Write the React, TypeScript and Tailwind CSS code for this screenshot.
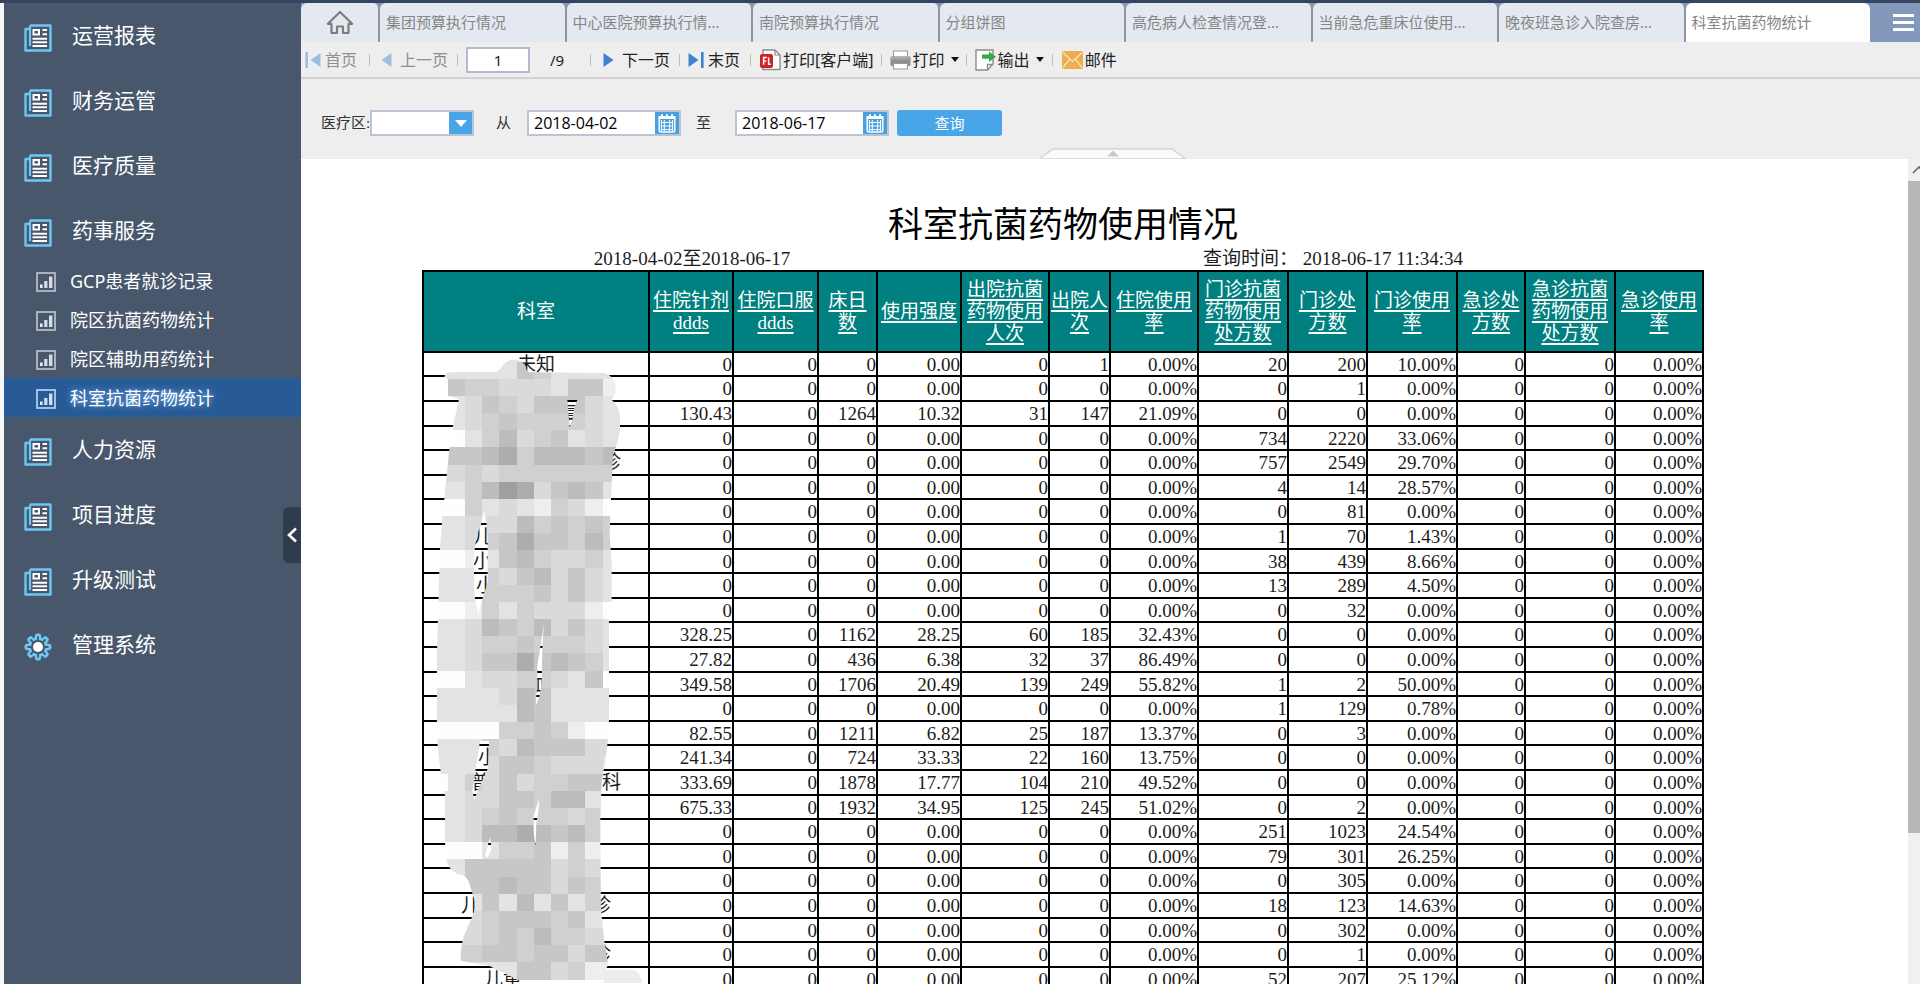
import React from "react";

const SANS = "font-['Noto_Sans','Noto_Sans_CJK_SC',sans-serif]";
const SERIF = "font-['Liberation_Serif','Noto_Sans_CJK_SC',serif]";

/* ---------- icons ---------- */

function ReportIcon() {
  return (
    <svg width="28" height="28" viewBox="0 0 28 28" fill="none" className="shrink-0">
      <path d="M6 1.5H26.5V26.5H1.5V5H6" stroke="#6cc7f2" strokeWidth="2.4" strokeLinejoin="round" />
      <path d="M6 1.5V22" stroke="#6cc7f2" strokeWidth="2.2" />
      <rect x="9.5" y="6" width="5.5" height="4.5" stroke="#fff" strokeWidth="2" />
      <path d="M18.5 6H23M18.5 10.3H23M8.5 14.7H23M8.5 18.3H23M8.5 22H23" stroke="#fff" strokeWidth="2" />
    </svg>
  );
}

function GearIcon() {
  const teeth = [0, 45, 90, 135, 180, 225, 270, 315];
  return (
    <svg width="28" height="28" viewBox="0 0 28 28" className="shrink-0">
      {teeth.map((a) => (
        <rect key={a} x="10.8" y="0.5" width="6.4" height="8" rx="2.4" fill="#6cc7f2" transform={`rotate(${a} 14 14)`} />
      ))}
      <circle cx="14" cy="14" r="10" fill="#6cc7f2" />
      {teeth.map((a) => (
        <rect key={a} x="13.1" y="3.2" width="1.8" height="5" rx="0.9" fill="#48576c" transform={`rotate(${a} 14 14)`} />
      ))}
      <circle cx="14" cy="14" r="7.2" fill="#48576c" />
      <circle cx="14" cy="14" r="5" fill="#fff" />
    </svg>
  );
}

function ChartIcon({ active }: { active?: boolean }) {
  return (
    <svg width="20" height="20" viewBox="0 0 20 20" fill="none" className="shrink-0">
      <rect x="1" y="1" width="18" height="18" stroke={active ? "#a9cdf3" : "#b4bcc6"} strokeWidth="1.8" />
      <rect x="4" y="12.5" width="2.6" height="3.5" fill="#e8edf2" />
      <rect x="8.2" y="9" width="3.2" height="7" fill="#d5dce4" />
      <rect x="13" y="4.5" width="3.4" height="11.5" fill="#d5dce4" />
    </svg>
  );
}

function CalendarIcon() {
  return (
    <svg width="18" height="20" viewBox="0 0 18 20" fill="none">
      <path d="M4 1V4M9 1V4M14 1V4" stroke="#fff" strokeWidth="1.6" />
      <rect x="0.5" y="3" width="17" height="3" fill="#fff" />
      <rect x="1.2" y="4" width="15.6" height="15" rx="1.5" stroke="#fff" strokeWidth="1.4" />
      <path d="M3 9.5H15M3 13H15M3 16.6H15M6.3 7V18M11.7 7V18M3.4 7V18M14.6 7V18" stroke="#fff" strokeWidth="1" />
    </svg>
  );
}

function FlashDocIcon() {
  return (
    <svg width="21" height="22" viewBox="0 0 21 22" fill="none">
      <path d="M3 1H15L20 6V20.5H3Z" fill="#fff" stroke="#8a8a8a" strokeWidth="1.4" />
      <path d="M15 1V6H20" stroke="#8a8a8a" strokeWidth="1.2" />
      <rect x="0" y="5" width="13" height="14" rx="2" fill="#cf2127" />
      <path d="M3.6 15.8V8.6H6.8M3.6 12H6.2M8.6 8.4V15.2H10.8" stroke="#fff" strokeWidth="1.5" />
    </svg>
  );
}

function PrinterIcon() {
  return (
    <svg width="21" height="20" viewBox="0 0 21 20" fill="none">
      <rect x="3.5" y="1" width="14" height="7" fill="#fff" stroke="#999" strokeWidth="1" />
      <rect x="0.5" y="6.5" width="20" height="9.5" rx="1.5" fill="#8e8e8e" />
      <rect x="0.5" y="6.5" width="20" height="3" rx="1.2" fill="#a9a9a9" />
      <rect x="3.5" y="13.5" width="14" height="5.5" fill="#fff" stroke="#999" strokeWidth="1" />
    </svg>
  );
}

function ExportIcon() {
  return (
    <svg width="21" height="22" viewBox="0 0 21 22" fill="none">
      <path d="M1 1H18V15L12.5 21H1Z" fill="#fff" stroke="#8a8a8a" strokeWidth="1.4" />
      <path d="M12.5 21V15.5H18" stroke="#8a8a8a" strokeWidth="1.3" />
      <path d="M7 5.5H14V2.5L21 7.7L14 13V9.8H7Z" fill="#35a84c" />
    </svg>
  );
}

function MailIcon() {
  return (
    <svg width="21" height="18" viewBox="0 0 21 18" fill="none">
      <rect width="21" height="18" rx="1.5" fill="#ecae4f" />
      <path d="M1 1.5L10.5 10.5L20 1.5M1 16.5L7.8 8.2M20 16.5L13.2 8.2" stroke="#fbe6c0" strokeWidth="1.2" />
    </svg>
  );
}

function Arrow({ dir, bar, faded }: { dir: "left" | "right"; bar?: boolean; faded?: boolean }) {
  const color = faded ? "#9dbde3" : "#3f82cf";
  return (
    <svg
      width={bar ? 16 : 11}
      height="16"
      viewBox={bar ? "0 0 16 16" : "0 0 11 16"}
      className={dir === "left" ? "rotate-180" : ""}
    >
      <path d="M0.5 1L10.5 8L0.5 15Z" fill={color} />
      {bar && <rect x="13" y="0" width="2.6" height="16" fill={color} />}
    </svg>
  );
}

function Caret() {
  return (
    <svg width="8" height="5" viewBox="0 0 8 5">
      <path d="M0 0H8L4 5Z" fill="#111" />
    </svg>
  );
}

/* ---------- sidebar ---------- */

type MenuItem = { label: string; gear?: boolean; children?: string[] };

const MENU: MenuItem[] = [
  { label: "运营报表" },
  { label: "财务运管" },
  { label: "医疗质量" },
  { label: "药事服务", children: ["GCP患者就诊记录", "院区抗菌药物统计", "院区辅助用药统计", "科室抗菌药物统计"] },
  { label: "人力资源" },
  { label: "项目进度" },
  { label: "升级测试" },
  { label: "管理系统", gear: true },
];

const ACTIVE = "科室抗菌药物统计";

function Sidebar() {
  return (
    <aside className="relative w-[297px] shrink-0 bg-[#48576c] text-white">
      <nav>
        <ul>
          {MENU.map((m) => (
            <li key={m.label}>
              <a href="#" className="flex h-[65px] items-center gap-5 pl-5">
                <span className="pt-1">{m.gear ? <GearIcon /> : <ReportIcon />}</span>
                <span className="pb-[2px] text-[21px] leading-7">{m.label}</span>
              </a>
              {m.children && (
                <ul className="-mt-[2px]">
                  {m.children.map((c) => (
                    <li key={c}>
                      <a
                        href="#"
                        className={
                          c === ACTIVE
                            ? "flex h-[39px] items-center gap-3.5 bg-[#285a96] pt-[2px] pl-8 [text-shadow:0_0_6px_#7fc0ff]"
                            : "flex h-[39px] items-center gap-3.5 pt-[2px] pl-8"
                        }
                      >
                        <ChartIcon active={c === ACTIVE} />
                        <span className="pb-[2px] text-[18px] leading-6">{c}</span>
                      </a>
                    </li>
                  ))}
                </ul>
              )}
            </li>
          ))}
        </ul>
      </nav>
      <button
        aria-label="收起菜单"
        className="absolute top-[504px] right-0 flex h-14 w-[18px] items-center justify-center rounded-l-md bg-[#303b4b]"
      >
        <svg width="10" height="16" viewBox="0 0 10 16" fill="none">
          <path d="M9 1.5L2 8L9 14.5" stroke="#fff" strokeWidth="2.6" />
        </svg>
      </button>
    </aside>
  );
}

/* ---------- tabs and toolbars ---------- */

const TABS = [
  "集团预算执行情况",
  "中心医院预算执行情...",
  "南院预算执行情况",
  "分组饼图",
  "高危病人检查情况登...",
  "当前急危重床位使用...",
  "晚夜班急诊入院查房...",
  "科室抗菌药物统计",
];

function TabBar() {
  return (
    <div className="flex h-[39px] bg-[#8299bb]">
      <button aria-label="首页" className="flex w-[79px] items-center justify-center rounded-t-md border-r-2 border-[#8e969f] bg-[#e4e9f1]">
        <svg width="28" height="25" viewBox="0 0 28 25" fill="none">
          <path d="M14 2L1.8 13.8H5.5V23H11V16.5H17V23H22.5V13.8H26.2Z" stroke="#7d7d7d" strokeWidth="2.2" strokeLinejoin="round" />
        </svg>
      </button>
      {TABS.map((t) => (
        <button
          key={t}
          className={
            t === ACTIVE
              ? "min-w-0 flex-1 rounded-t-md bg-white px-[6px] text-left text-[15px] whitespace-nowrap text-[#858585]"
              : "min-w-0 flex-1 rounded-t-md border-r-2 border-[#8e969f] bg-[#e4e9f1] px-[6px] text-left text-[15px] whitespace-nowrap text-[#858585]"
          }
        >
          {t}
        </button>
      ))}
      <button aria-label="菜单" className="flex w-[50px] items-center justify-end pr-1.5">
        <svg width="21" height="17" viewBox="0 0 21 17">
          <path d="M0 1.5H21M0 8.5H21M0 15.5H21" stroke="#fff" strokeWidth="3" />
        </svg>
      </button>
    </div>
  );
}

function Sep() {
  return <span className="h-3 w-px bg-[#bdbdbd]" />;
}

function PagerBar() {
  return (
    <div className="flex h-[37px] items-center border-b-2 border-[#d0d1d0] bg-[#eeeeee] pl-1 text-[16px] leading-6 whitespace-nowrap text-[#222]">
      <button className="flex items-center gap-1 text-[#8f8f8f]">
        <Arrow dir="left" bar faded />
        首页
      </button>
      <span className="flex w-6 justify-center"><Sep /></span>
      <button className="flex items-center gap-2 text-[#8f8f8f]">
        <Arrow dir="left" faded />
        上一页
      </button>
      <span className="flex w-[18px] justify-center"><Sep /></span>
      <input
        aria-label="页码"
        defaultValue="1"
        className="h-[26px] w-16 border-2 border-[#b4bacb] bg-white text-center text-[15px] outline-none"
      />
      <span className="w-[60px] pl-5 text-[15px]">/9</span>
      <Sep />
      <button className="ml-3 flex items-center gap-2">
        <Arrow dir="right" />
        下一页
      </button>
      <span className="flex w-[18px] justify-center"><Sep /></span>
      <button className="flex items-center gap-1">
        <Arrow dir="right" bar />
        末页
      </button>
      <span className="flex w-5 justify-center"><Sep /></span>
      <button className="flex items-center gap-0.5">
        <FlashDocIcon />
        打印[客户端]
      </button>
      <span className="flex w-4 justify-center"><Sep /></span>
      <button className="flex items-center gap-0.5">
        <PrinterIcon />
        打印
        <span className="pl-1"><Caret /></span>
      </button>
      <span className="flex w-4 justify-center"><Sep /></span>
      <button className="flex items-center gap-0.5">
        <ExportIcon />
        输出
        <span className="pl-1"><Caret /></span>
      </button>
      <span className="flex w-[18px] justify-center"><Sep /></span>
      <button className="flex items-center gap-0.5">
        <MailIcon />
        邮件
      </button>
    </div>
  );
}

function DateField({ id, value }: { id: string; value: string }) {
  return (
    <div className="flex h-[26px] w-[154px] border-2 border-[#bcc3d2] bg-white">
      <input
        id={id}
        defaultValue={value}
        className="min-w-0 flex-1 bg-white pl-[5px] font-['Open_Sans',sans-serif] text-[16px] text-black outline-none"
      />
      <button aria-label="选择日期" className="flex w-6 items-center justify-center bg-[#489fdd]">
        <CalendarIcon />
      </button>
    </div>
  );
}

function FilterBar() {
  return (
    <div className="relative flex h-20 items-center bg-[#eeeeee] pt-2 pl-5 text-[#333]">
      <label htmlFor="area" className={`${SERIF} w-[49px] text-[15px] whitespace-nowrap`}>
        医疗区:
      </label>
      <div className="relative h-[26px] w-[104px]">
        <select id="area" className="h-full w-full appearance-none border-2 border-[#bcc3d2] bg-white outline-none" />
        <span className="pointer-events-none absolute top-0.5 right-0.5 bottom-0.5 flex w-[23px] items-center justify-center bg-[#47a5e8]">
          <svg width="12" height="7" viewBox="0 0 12 7">
            <path d="M0 0H12L6 7Z" fill="#fff" />
          </svg>
        </span>
      </div>
      <label htmlFor="from" className={`${SERIF} w-[53px] pl-[22px] text-[15px]`}>
        从
      </label>
      <DateField id="from" value="2018-04-02" />
      <label htmlFor="to" className={`${SERIF} w-[54px] pl-[15px] text-[15px]`}>
        至
      </label>
      <DateField id="to" value="2018-06-17" />
      <button className="ml-2 h-[26px] w-[105px] rounded-[3px] bg-[#47a5e8] text-[15px] leading-6 text-white">查询</button>
      <button aria-label="收起查询条件" className="absolute bottom-0 left-[738px]">
        <svg width="147" height="11" viewBox="0 0 147 11" className="block">
          <path d="M0 11L14 1H133L147 11Z" fill="#fafafa" stroke="#d4d4d4" strokeWidth="1.4" />
          <path d="M68 8.5L74 2.5L80 8.5Z" fill="#c9c9c9" />
        </svg>
      </button>
    </div>
  );
}

/* ---------- report ---------- */

const HEADERS: string[][] = [
  ["科室"],
  ["住院针剂", "ddds"],
  ["住院口服", "ddds"],
  ["床日", "数"],
  ["使用强度"],
  ["出院抗菌", "药物使用", "人次"],
  ["出院人", "次"],
  ["住院使用", "率"],
  ["门诊抗菌", "药物使用", "处方数"],
  ["门诊处", "方数"],
  ["门诊使用", "率"],
  ["急诊处", "方数"],
  ["急诊抗菌", "药物使用", "处方数"],
  ["急诊使用", "率"],
];

const COLS = [
  "w-[226px]", "w-[84px]", "w-[85px]", "w-[59px]", "w-[84px]", "w-[88px]", "w-[61px]",
  "w-[88px]", "w-[90px]", "w-[79px]", "w-[90px]", "w-[68px]", "w-[90px]", "w-[88px]",
];

/* Columns: 针剂, 床日, 强度, 抗菌人次, 出院人次, 住院率, 门诊抗菌, 门诊处方, 门诊率 */
const DATA = `
0 0 0.00 0 1 0.00% 20 200 10.00%
0 0 0.00 0 0 0.00% 0 1 0.00%
130.43 1264 10.32 31 147 21.09% 0 0 0.00%
0 0 0.00 0 0 0.00% 734 2220 33.06%
0 0 0.00 0 0 0.00% 757 2549 29.70%
0 0 0.00 0 0 0.00% 4 14 28.57%
0 0 0.00 0 0 0.00% 0 81 0.00%
0 0 0.00 0 0 0.00% 1 70 1.43%
0 0 0.00 0 0 0.00% 38 439 8.66%
0 0 0.00 0 0 0.00% 13 289 4.50%
0 0 0.00 0 0 0.00% 0 32 0.00%
328.25 1162 28.25 60 185 32.43% 0 0 0.00%
27.82 436 6.38 32 37 86.49% 0 0 0.00%
349.58 1706 20.49 139 249 55.82% 1 2 50.00%
0 0 0.00 0 0 0.00% 1 129 0.78%
82.55 1211 6.82 25 187 13.37% 0 3 0.00%
241.34 724 33.33 22 160 13.75% 0 0 0.00%
333.69 1878 17.77 104 210 49.52% 0 0 0.00%
675.33 1932 34.95 125 245 51.02% 0 2 0.00%
0 0 0.00 0 0 0.00% 251 1023 24.54%
0 0 0.00 0 0 0.00% 79 301 26.25%
0 0 0.00 0 0 0.00% 0 305 0.00%
0 0 0.00 0 0 0.00% 18 123 14.63%
0 0 0.00 0 0 0.00% 0 302 0.00%
0 0 0.00 0 0 0.00% 0 1 0.00%
0 0 0.00 0 0 0.00% 52 207 25.12%`
  .trim()
  .split("\n")
  .map((line) => {
    const v = line.split(" ");
    return [v[0], "0", ...v.slice(1), "0", "0", "0.00%"];
  });

/* Parts of department names that the redaction leaves readable. */
const NAMES: Record<number, { left?: string; right?: string; box: string }> = {
  0: { left: "未知", box: "w-[38px]" },
  2: { right: "复", box: "w-[88px]" },
  4: { right: "诊", box: "w-[170px]" },
  7: { left: "儿", box: "w-[126px]" },
  8: { left: "小", box: "w-[126px]" },
  9: { left: "小", box: "w-[120px]" },
  13: { left: "血", box: "w-[19px]" },
  16: { left: "小", box: "w-[116px]" },
  17: { left: "普", right: "科", box: "w-[170px] pl-5" },
  22: { left: "儿", right: "诊", box: "w-[150px]" },
  24: { right: "诊", box: "w-[150px]" },
  25: { left: "儿童", box: "w-[104px]" },
};

const SHADES: Record<string, string> = {
  ".": "#fefefe", "1": "#eeeeee", "2": "#e3e3e3", "3": "#dadada", "4": "#d0d0d0",
  "5": "#c7c7c7", "6": "#bcbcbc", "7": "#adadad", "8": "#9f9f9f",
};

const MOSAIC = [
  "22222222222", "22222542222", ".5443332551", "22354355532", "22345444432", "..246345232",
  "45567466656", "33434444444", "22468735652", "..42321431.", "22333645454", "22345755464",
  "..125643342", "22243563532", "22244453532", "..14243331.", "22365463532", "22344544432",
  "22355756542", "..23344325.", "22223652222", "22222652222", "....44541..", "22243655533",
  "22235543332", ".2435344553", "22335546622", "22345444344", "22366765644", "...24451411",
  "22555553433", "..556553544", "..252625244", "33345554522", "33345464433", "44455455355",
  "22222553411",
].slice(1);

const OUTLINE =
  "M106 85Q108 72 122 70L262 68Q275 64 283 46Q300 30 318 32Q345 34 350 56Q352 66 362 70L585 72Q602 76 614 92Q624 112 618 135L608 152Q630 172 633 200V240Q628 280 612 320L606 450L602 560L608 640V760L600 814V1122L596 1180L588 1240L578 1300L574 1400V1480L576 1680L585 1770L597 1848L590 1862H670Q690 1866 692 1880L700 1902H340Q318 1888 290 1875L240 1850L155 1835Q155 1790 165 1760L195 1690L200 1665L180 1600Q172 1582 160 1578Q126 1574 113 1538L108 1480V1340L96 1278L86 1190L83 1120V942L90 700L93 600L100 500L106 450L120 310L130 240L150 150L116 140V90Z" +
  "M475 153H505Q492 180 490 212L482 235Z" +
  "M225 485Q234 520 236 560V700L220 750L208 795Q196 750 195 720V620Q200 560 215 530Z" +
  "M405 825Q402 860 400 900L398 1000Q394 1045 380 1070Q386 1000 385 950Z" +
  "M213 1176H240Q240 1220 236 1260L208 1320L196 1352L190 1325Z" +
  "M390 1350Q390 1390 382 1420L380 1490L374 1450V1400Z" +
  "M243 1465L248 1500L236 1525L228 1520Z";

function Redaction() {
  return (
    <svg
      width="226"
      height="634"
      viewBox="39 0 678 1902"
      className="pointer-events-none absolute top-[79px] left-0"
      aria-hidden="true"
    >
      <defs>
        <clipPath id="blot">
          <path d={OUTLINE} clipRule="evenodd" />
        </clipPath>
      </defs>
      <g clipPath="url(#blot)" shapeRendering="crispEdges">
        {MOSAIC.map((row, r) =>
          row.split("").map((ch, c) => (
            <rect key={`${r}-${c}`} x={64.5 + c * 51.6} y={37.6 + r * 51.5} width="52.6" height="52.6" fill={SHADES[ch]} />
          )),
        )}
        <rect x="100" y="28" width="500" height="12" fill="#e3e3e3" />
        <rect x="584" y="1856" width="120" height="50" fill="#ececec" />
      </g>
    </svg>
  );
}

function ReportTable() {
  return (
    <table className="table-fixed border-collapse text-[19px] text-[#1c1c1c]">
      <colgroup>
        {COLS.map((w, i) => (
          <col key={i} className={w} />
        ))}
      </colgroup>
      <thead>
        <tr className="h-[81px] bg-[#008080] text-white">
          {HEADERS.map((lines, i) => (
            <th key={i} className="border-2 border-black p-0 text-center leading-[22px] font-normal whitespace-nowrap">
              {i === 0 ? (
                lines[0]
              ) : (
                <a href="#" className="underline decoration-2 underline-offset-[3px]">
                  {lines.map((l, k) => (
                    <React.Fragment key={k}>
                      {k > 0 && <br />}
                      {l}
                    </React.Fragment>
                  ))}
                </a>
              )}
            </th>
          ))}
        </tr>
      </thead>
      <tbody>
        {DATA.map((row, i) => {
          const name = NAMES[i];
          return (
            <tr key={i} className={i % 5 === 0 || i % 5 === 3 ? "h-[24px]" : "h-[25px]"}>
              <td className="border-2 border-black p-0 pt-px leading-5">
                {name && (
                  <span className={`mx-auto flex justify-between whitespace-nowrap ${name.box}`}>
                    <span>{name.left}</span>
                    <span>{name.right}</span>
                  </span>
                )}
              </td>
              {row.map((v, k) => (
                <td key={k} className="border-2 border-black p-0 pt-px text-right leading-5">
                  {v}
                </td>
              ))}
            </tr>
          );
        })}
      </tbody>
    </table>
  );
}

function Report() {
  return (
    <div className="flex min-h-0 flex-1 bg-white">
      <main className={`${SERIF} min-w-0 flex-1 overflow-hidden pt-[47px] pl-[121px] text-[#1c1c1c]`}>
        <div className="w-[1282px]">
          <h1 className="text-center text-[35px] leading-10 text-black">科室抗菌药物使用情况</h1>
          <div className="flex h-6 text-[19px] leading-[26px] whitespace-nowrap">
            <p className="w-[540px] text-center">2018-04-02至2018-06-17</p>
            <p className="flex-1 text-center">查询时间： 2018-06-17 11:34:34</p>
          </div>
          <div className="relative">
            <ReportTable />
            <Redaction />
          </div>
        </div>
      </main>
      <div className="flex w-3 flex-col overflow-hidden bg-[#f0f0f0]">
        <div className="flex h-[22px] items-center pl-1">
          <svg width="14" height="8" viewBox="0 0 14 8" fill="none" className="shrink-0">
            <path d="M1 7L7 1L13 7" stroke="#666" strokeWidth="1.6" />
          </svg>
        </div>
        <div className="h-[79%] bg-[#b7b7b7]" />
      </div>
    </div>
  );
}

export default function App() {
  return (
    <div className={`${SANS} flex h-screen flex-col overflow-hidden bg-[#34455f]`}>
      <div className="mt-[3px] flex min-h-0 flex-1">
        <div className="w-1 shrink-0 bg-[#f4f6f8]" />
        <Sidebar />
        <div className="flex min-w-0 flex-1 flex-col">
          <TabBar />
          <PagerBar />
          <FilterBar />
          <Report />
        </div>
      </div>
    </div>
  );
}
